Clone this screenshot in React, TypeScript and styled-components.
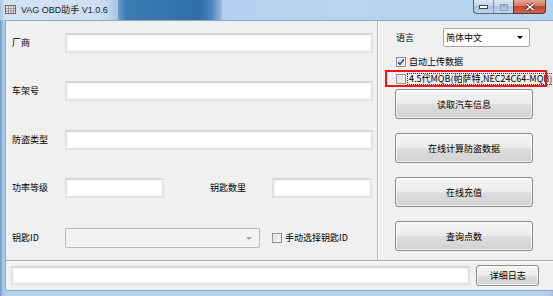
import React from 'react';
import styled, { createGlobalStyle } from 'styled-components';

const Global = createGlobalStyle`
  html, body { margin: 0; padding: 0; width: 553px; height: 296px; overflow: hidden; background: #b0cce8; }
  #root { width: 553px; height: 296px; }
  * { box-sizing: border-box; }
`;

const Window = styled.div`
  width: 553px;
  height: 296px;
  display: flex;
  flex-direction: column;
  background: #b3cfec;
  font-family: "Noto Sans CJK SC", "Liberation Sans", sans-serif;
  font-size: 9px;
  color: #000;
`;

const TitleBar = styled.div`
  height: 20px;
  flex: none;
  display: flex;
  align-items: stretch;
`;

const TitleLead = styled.div`
  width: 118px;
  flex: none;
  display: flex;
  align-items: flex-start;
  background: linear-gradient(to right, #a9c4df, #d3e3f2 5px, #cde0f1 100px, #a9c7e3 118px);
`;

const TitleGlass = styled.div`
  width: 104px;
  flex: none;
  background: linear-gradient(to right, #6c9bc9, #3d7bb3 8px, #2f6ea8 82px, #4f88bd 94px, #9cc0e4 104px);
`;

const TitleRest = styled.div`
  flex: 1;
  min-width: 0;
  display: flex;
  align-items: flex-start;
  justify-content: flex-end;
  background: linear-gradient(to right, #b3d1ee, #b8d4ef 120px, #b3d1ee);
`;

const IconBox = styled.span`
  width: 11px;
  height: 9px;
  margin: 5px 0 0 5px;
  flex: none;
  display: flex;
`;

const TitleText = styled.span`
  margin: 4px 0 0 5px;
  font-family: "Liberation Sans", "Noto Sans CJK SC", sans-serif;
  font-size: 9px;
  line-height: 12px;
  color: #1b1b1b;
  white-space: nowrap;
`;

const Controls = styled.div`
  display: flex;
  margin-right: 7px;
  height: 14px;
  flex: none;
`;

const CtrlGroup = styled.div`
  display: flex;
  border: 1px solid #4f6379;
  border-top: none;
  border-right: none;
  border-radius: 0 0 0 4px;
  overflow: hidden;
  background: linear-gradient(180deg, #dbe7f3 0%, #c2d6ea 45%, #a9c2dc 50%, #bcd4ec 100%);
`;

const CtrlBtn = styled.div<{ $w: number }>`
  width: ${p => p.$w}px;
  height: 14px;
  display: flex;
  align-items: center;
  justify-content: center;
  & + & { border-left: 1px solid #7f93aa; }
`;

const CloseBtn = styled.div`
  width: 33px;
  height: 14px;
  display: flex;
  align-items: center;
  justify-content: center;
  border: 1px solid #4f3a3a;
  border-top: none;
  border-radius: 0 0 4px 0;
  background: linear-gradient(180deg, #e8a493 0%, #d47a66 45%, #c2452d 50%, #d1654d 100%);
`;

const Frame = styled.div`
  flex: 1;
  display: flex;
  padding: 0 5px 5px 5px;
  min-height: 0;
  background: linear-gradient(to right, #6f98c4, #a7c5e5 3px, #b3cfec 5px, #b3cfec 548px, #a3c1e2);
`;

const Client = styled.div`
  flex: 1;
  display: flex;
  flex-direction: column;
  background: #f0f0f0;
  border: 1px solid #8ea6c0;
`;

const TopSection = styled.div`
  height: 239px;
  display: flex;
  flex: none;
`;

const LeftPanel = styled.div`
  width: 371px;
  flex: none;
  display: flex;
  flex-direction: column;
  padding: 12px 4px 0 6px;
`;

const FieldRow = styled.div<{ $h: number }>`
  height: ${p => p.$h}px;
  flex: none;
  display: flex;
  align-items: flex-start;
`;

const Label = styled.span<{ $w: number; $ml?: number }>`
  width: ${p => p.$w}px;
  margin-left: ${p => p.$ml ?? 0}px;
  height: 20px;
  line-height: 20px;
  flex: none;
  white-space: nowrap;
`;

const TextBox = styled.div<{ $w?: number }>`
  height: 20px;
  ${p => (p.$w ? `width: ${p.$w}px; flex: none;` : 'flex: 1;')}
  background: #fff;
  border: 2px solid #e2e3e4;
  border-top-color: #d4d6d8;
  box-shadow: inset 0 0 0 1px #f6f6f6;
`;

const ComboDisabled = styled.div`
  width: 195px;
  height: 20px;
  flex: none;
  display: flex;
  align-items: center;
  justify-content: flex-end;
  padding-right: 7px;
  background: #f3f3f3;
  border: 1px solid #b7b9bc;
  border-radius: 2px;
`;

const Arrow = styled.span<{ $c: string }>`
  width: 0;
  height: 0;
  border-left: 3px solid transparent;
  border-right: 3px solid transparent;
  border-top: 3px solid ${p => p.$c};
`;

const CheckRow = styled.div<{ $mt?: number; $ml?: number }>`
  display: flex;
  align-items: center;
  height: 12px;
  flex: none;
  margin-top: ${p => p.$mt ?? 0}px;
  margin-left: ${p => p.$ml ?? 0}px;
  position: relative;
  white-space: nowrap;
`;

const CheckBox = styled.span`
  width: 10px;
  height: 10px;
  flex: none;
  border: 1px solid #8f8f8f;
  background: linear-gradient(135deg, #d8d8d8, #f6f6f6);
  box-shadow: inset 0 0 0 1px #f4f4f4;
  display: flex;
  align-items: center;
  justify-content: center;
`;

const CheckText = styled.span<{ $focus?: boolean }>`
  margin-left: 2px;
  line-height: 10px;
  padding: 0 1px;
  ${p => (p.$focus ? 'outline: 1px dotted #333; outline-offset: 0px;' : '')}
`;

const Highlight = styled.div`
  position: absolute;
  left: -11px;
  top: -3px;
  width: 162px;
  height: 17px;
  border: 2px solid #ff1010;
  pointer-events: none;
`;

const VDivider = styled.div`
  width: 2px;
  flex: none;
  border-left: 1px solid #b9b9b9;
  border-right: 1px solid #ffffff;
`;

const RightPanel = styled.div`
  flex: 1;
  display: flex;
  flex-direction: column;
  padding: 7px 0 0 17px;
  overflow: hidden;
  min-width: 0;
`;

const LangRow = styled.div`
  display: flex;
  align-items: center;
  height: 19px;
  flex: none;
`;

const LangCombo = styled.div`
  width: 87px;
  height: 19px;
  flex: none;
  display: flex;
  align-items: center;
  justify-content: space-between;
  padding: 0 6px 0 2px;
  background: #fff;
  border: 1px solid #a6a6a6;
  border-radius: 2px;
`;

const ButtonStack = styled.div`
  display: flex;
  flex-direction: column;
  gap: 14px;
  margin: 4px 0 0 -1px;
`;

const ActionButton = styled.div<{ $w: number; $h: number }>`
  width: ${p => p.$w}px;
  height: ${p => p.$h}px;
  flex: none;
  display: flex;
  align-items: center;
  justify-content: center;
  border: 1px solid #8c8c8c;
  border-radius: 3px;
  background: linear-gradient(180deg, #f5f5f5 0%, #ececec 48%, #dedede 52%, #d2d2d2 100%);
  box-shadow: inset 0 0 0 1px rgba(255,255,255,0.7);
  white-space: nowrap;
`;

const HDivider = styled.div`
  height: 2px;
  flex: none;
  border-top: 1px solid #a9a9a9;
  border-bottom: 1px solid #ffffff;
`;

const StatusRow = styled.div`
  flex: 1;
  display: flex;
  align-items: flex-start;
  gap: 6px;
  padding: 4px 14px 0 5px;
`;

const StatusBox = styled(TextBox)`
  height: 19px;
`;

const LogButton = styled(ActionButton)`
  margin-top: -1px;
`;

const CheckMark = () => (
  <svg width="8" height="8" viewBox="0 0 8 8">
    <path d="M1 4.2 L3 6.3 L7 1.3" fill="none" stroke="#2b4f8f" strokeWidth="1.5" />
  </svg>
);

export default function App() {
  return (
    <>
      <Global />
      <Window>
        <TitleBar>
          <TitleLead>
            <IconBox>
              <svg width="11" height="9" viewBox="0 0 11 9">
                <rect x="0.5" y="0.5" width="10" height="8" fill="#e8e8e8" stroke="#6a6a6a" />
                <path d="M1 3.5 H10 M1 6 H10 M3.5 1 V8 M6 1 V8 M8.5 1 V8" stroke="#8a8a8a" strokeWidth="0.8" />
              </svg>
            </IconBox>
            <TitleText>VAG OBD助手 V1.0.6</TitleText>
          </TitleLead>
          <TitleGlass />
          <TitleRest>
            <Controls>
              <CtrlGroup>
                <CtrlBtn $w={19}>
                  <svg width="9" height="4" viewBox="0 0 9 4">
                    <rect x="0.5" y="0.5" width="8" height="3" fill="#fff" stroke="#3a4a5c" strokeWidth="1" />
                  </svg>
                </CtrlBtn>
                <CtrlBtn $w={20}>
                  <svg width="8" height="7" viewBox="0 0 8 7">
                    <rect x="0.5" y="0.5" width="7" height="6" fill="none" stroke="#8a9cb0" strokeWidth="1" />
                    <rect x="1.5" y="1.5" width="5" height="1" fill="#8a9cb0" />
                  </svg>
                </CtrlBtn>
              </CtrlGroup>
              <CloseBtn>
                <svg width="10" height="8" viewBox="0 0 10 8">
                  <path d="M1.5 1 L8.5 7 M8.5 1 L1.5 7" stroke="#4a2a2a" strokeWidth="3" />
                  <path d="M1.5 1 L8.5 7 M8.5 1 L1.5 7" stroke="#ffffff" strokeWidth="1.6" />
                </svg>
              </CloseBtn>
            </Controls>
          </TitleRest>
        </TitleBar>
        <Frame>
          <Client>
            <TopSection>
              <LeftPanel>
                <FieldRow $h={48}>
                  <Label $w={53}>厂商</Label>
                  <TextBox />
                </FieldRow>
                <FieldRow $h={49}>
                  <Label $w={53}>车架号</Label>
                  <TextBox />
                </FieldRow>
                <FieldRow $h={48}>
                  <Label $w={53}>防盗类型</Label>
                  <TextBox />
                </FieldRow>
                <FieldRow $h={50}>
                  <Label $w={53}>功率等级</Label>
                  <TextBox $w={99} />
                  <Label $w={62} $ml={46}>钥匙数里</Label>
                  <TextBox $w={100} />
                </FieldRow>
                <FieldRow $h={20}>
                  <Label $w={53}>钥匙ID</Label>
                  <ComboDisabled>
                    <Arrow $c="#a8a8a8" />
                  </ComboDisabled>
                  <CheckRow $mt={4} $ml={12}>
                    <CheckBox />
                    <CheckText>手动选择钥匙ID</CheckText>
                  </CheckRow>
                </FieldRow>
              </LeftPanel>
              <VDivider />
              <RightPanel>
                <LangRow>
                  <Label $w={47}>语言</Label>
                  <LangCombo>
                    <span>简体中文</span>
                    <Arrow $c="#000" />
                  </LangCombo>
                </LangRow>
                <CheckRow $mt={9}>
                  <CheckBox>
                    <CheckMark />
                  </CheckBox>
                  <CheckText>自动上传数据</CheckText>
                </CheckRow>
                <CheckRow $mt={5}>
                  <CheckBox />
                  <CheckText $focus>4.5代MQB(帕萨特,NEC24C64-MQB)</CheckText>
                  <Highlight />
                </CheckRow>
                <ButtonStack>
                  <ActionButton $w={138} $h={30}>读取汽车信息</ActionButton>
                  <ActionButton $w={138} $h={30}>在线计算防盗数据</ActionButton>
                  <ActionButton $w={138} $h={30}>在线充值</ActionButton>
                  <ActionButton $w={138} $h={30}>查询点数</ActionButton>
                </ButtonStack>
              </RightPanel>
            </TopSection>
            <HDivider />
            <StatusRow>
              <StatusBox />
              <LogButton $w={63} $h={21}>详细日志</LogButton>
            </StatusRow>
          </Client>
        </Frame>
      </Window>
    </>
  );
}
